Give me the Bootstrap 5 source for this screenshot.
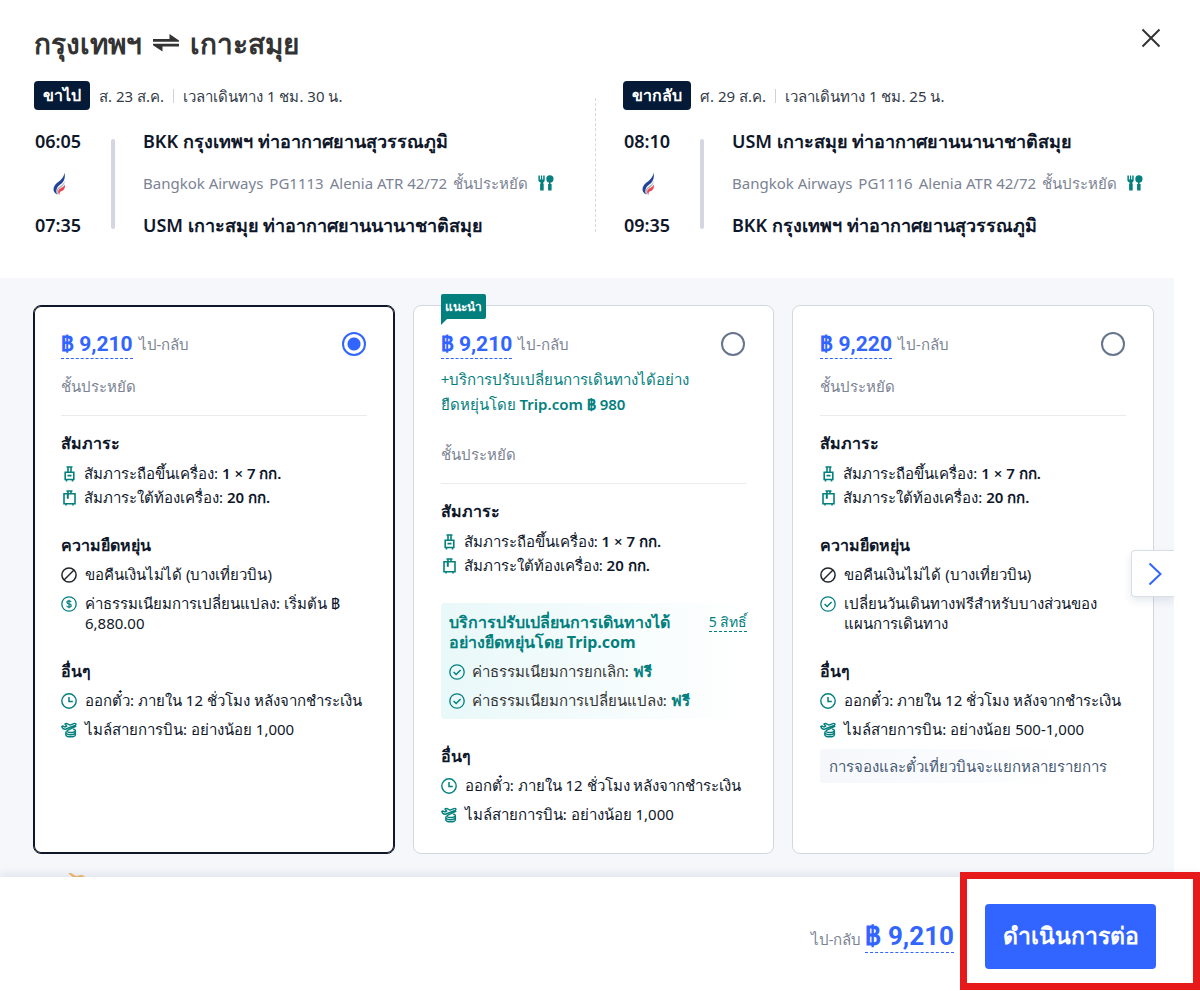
<!DOCTYPE html>
<html lang="th">
<head>
<meta charset="utf-8">
<meta name="viewport" content="width=device-width, initial-scale=1">
<title>กรุงเทพฯ ⇌ เกาะสมุย</title>
<link href="https://cdn.jsdelivr.net/npm/bootstrap@5.3.0/dist/css/bootstrap.min.css" rel="stylesheet">
<style>
:root{--ink:#0f172a;--blue:#3264ff;--teal:#03807e;--muted:#7b8394}
body{font-family:"Noto Sans",sans-serif;font-size:15px;line-height:20px;color:var(--ink);background:#fff}
svg{flex:none}
.trip-head{padding:26px 44px 41px 34px}
.trip-title{font-size:28px;line-height:34px;font-weight:700;color:#333;gap:10px}
.trip-bar{margin-bottom:21px}
.close-btn{width:28px;height:28px;margin:-4px -9px 0 0;color:#333}
.leg + .leg{padding-left:28px}
.leg-rule{left:0;top:17px;bottom:5px;border-left:1px dashed #d5d8de}
.leg-top{gap:9px;margin-bottom:19px}
.leg-tag{background:#051a37;color:#fff;border-radius:4px;padding:0 9px;line-height:29px;font-size:16px;font-weight:700}
.leg-meta{color:#333b49}
.leg-meta span + span{border-left:1px solid #ced2d9;padding-left:9px;margin-left:9px;line-height:14px}
.leg-grid{display:grid;grid-template-columns:48px 4px 1fr;column-gap:28px;row-gap:18px;line-height:24px;padding-left:1px}
.leg-line{grid-row:1 / span 3;grid-column:2;background:#d4d7df;border-radius:2px;margin:10px 0 8px}
.leg-time,.leg-port{font-size:18px;font-weight:600}
.leg-info{color:var(--muted);gap:6px}
.fares{background:#f5f7fb;margin-right:26px;padding:27px 20px 0 33px}
.fare-list{gap:18px}
.fare{flex:1 1 0;min-width:0;background:#fff;border:1px solid #d3d8e0;border-radius:8px;padding:23px 27px 29px}
.fare.chosen{border-color:var(--ink);box-shadow:inset 0 0 0 1px var(--ink)}
.fare-top{height:30px;gap:6px}
.price{color:var(--blue);font-family:Roboto,"Noto Sans",sans-serif;font-weight:700;font-size:21px;line-height:28px;border-bottom:1px dashed var(--blue);text-decoration:none}
.soft{color:var(--muted)}
.pick{appearance:none;width:24px;height:24px;border:2px solid #66758c;border-radius:50%;margin:0 1px 0 0;background:#fff}
.pick:checked{border-color:var(--blue);background:radial-gradient(circle,var(--blue) 0 6px,#fff 7px)}
.addon{margin-top:8px;margin-bottom:27px;color:var(--teal);line-height:25px}
.cabin{margin-top:17px;padding-bottom:19px;border-bottom:1px solid #e9ebef;color:var(--muted)}
.addon + .cabin{margin-top:0}
.sect{font-size:16px;line-height:20px;font-weight:700;margin:28px 0 0}
.cabin + .sect{margin-top:17px}
.item{display:flex;gap:8px;margin-top:9px}
.item svg{margin-top:3px;color:var(--teal)}
.item.bag{line-height:24px;margin-top:8px;gap:7px}
.item.bag svg{margin-top:5px}
.item.bag + .bag{margin-top:0}
.bag + .sect{margin-top:26px}
.perk + .sect{margin-top:27px}
.item b{font-weight:600}
.teal{color:var(--teal)}
.perk{margin-top:26px;margin-right:-1px;padding:9px 0 9px 8px;border-radius:4px;background:linear-gradient(90deg,#e9f8f9,#fff)}
.perk-name{color:var(--teal);font-size:16px;font-weight:700}
.perk .item{color:#333;gap:7px}
.perk-link{color:var(--teal);font-size:14px;line-height:19px;border-bottom:1px dashed var(--teal);text-decoration:none}
.note{margin-top:10px;line-height:34px;padding-left:9px;border-radius:3px;color:#455873;background:linear-gradient(90deg,#f5f7fb,#fff 80%)}
.ribbon{left:27px;top:-12px;background:var(--teal);color:#fff;font-size:12px;font-weight:700;line-height:25px;padding:0 4px;border-radius:2px 2px 2px 0}
.ribbon::after{content:"";position:absolute;left:0;top:25px;border-top:6px solid var(--teal);border-right:6px solid transparent}
.next-btn{right:0;top:272px;width:43px;height:47px;background:#fff;border:1px solid #d8deea;border-right:0;border-radius:4px 0 0 4px;color:var(--blue);box-shadow:0 4px 8px rgba(15,41,77,.1);padding:0 0 0 4px;clip-path:inset(-8px 0 -14px -10px)}
.peek{height:23px;overflow:hidden;padding-left:33px}
.paybar{box-shadow:0 -4px 8px rgba(15,41,77,.08);background:#fff;padding:27px 44px 22px}
.pay-price{font-size:26px;line-height:32px}
.go-wrap{margin-left:31px}
.go-btn{background:var(--blue);color:#fff;border:0;border-radius:4px;min-width:171px;height:65px;font-size:23px;font-weight:700;padding:0 16px 4px}
.callout{border:7px solid #e61a1a;inset:-32px -44px -21px -25px;pointer-events:none}
</style>
</head>
<body class="d-flex flex-column min-vh-100">
<svg class="d-none">
<symbol id="i-cabin" viewBox="0 0 16 16"><path d="M5.500 1h6M7 1v5M10 1v5M4.200 6.200h8.600v7.300H4.200zM6.500 9.600h4M5.500 13.500v1.900M11.500 13.500v1.900" fill="none" stroke="currentColor" stroke-width="1.600"/></symbol>
<symbol id="i-hold" viewBox="0 0 16 16"><path d="M5.500 1h6M7 1v2.800M10 1v2.800M3 3.800h11v9.900H3zM5 13.700v1.700M12 13.700v1.700" fill="none" stroke="currentColor" stroke-width="1.600"/><path d="M5.800 3.800h2v5h-2z" fill="currentColor"/></symbol>
<symbol id="i-no" viewBox="0 0 16 16"><path d="M13 3 3 13" stroke="currentColor" stroke-width="1.400"/><circle cx="8" cy="8" r="7.100" fill="none" stroke="currentColor" stroke-width="1.500"/></symbol>
<symbol id="i-fee" viewBox="0 0 16 16"><g fill="none" stroke="currentColor"><circle cx="8" cy="8" r="7.200" stroke-width="1.300"/><path d="M10.100 6.200C9.900 5.300 9.200 4.900 8 4.900S5.900 5.400 5.900 6.400C5.900 8.600 10.200 7.300 10.200 9.500 10.200 10.600 9.300 11.100 8 11.100S5.900 10.600 5.800 9.700M8 3.700v8.600" stroke-width="1.200"/></g></symbol>
<symbol id="i-ok" viewBox="0 0 16 16"><g fill="none" stroke="currentColor" stroke-width="1.300"><circle cx="8" cy="8" r="7.200"/><path d="m4.600 8 2.500 2.500 4.500-4.500" stroke-width="1.500"/></g></symbol>
<symbol id="i-clock" viewBox="0 0 16 16"><g fill="none" stroke="currentColor"><circle cx="8" cy="8" r="7.200" stroke-width="1.400"/><path d="M8 3.900v4.500h3.800" stroke-width="1.500"/></g></symbol>
<symbol id="i-miles" viewBox="0 0 16 16"><path d="M.8 4.500 2.200 4l1.600 1 2-.8L4 2l1.500-.6 3.600 1.700 3.700-1.500c2-.7 3 .9 1.200 1.700L5 7C3.200 7.600 1.600 6.600.8 4.500zM15.300 4.200 7 8.200c-1.500.8-1.400 1.600.5 2 2.800.5 6 0 6.700-1.200.4-.9-.4-1.500-2-1.800M5 9.500c-1.500 4 8.500 4.200 9.400 1M4.800 11v1.800c.5 2.600 9 2.700 9.600 0V9" fill="none" stroke="currentColor" stroke-width="1.400" stroke-linejoin="round"/></symbol>
<symbol id="i-meal" viewBox="0 0 16 16"><path d="M.4.500h1.500v4h1V.5h1.300v4h1V.5h1.500v5c0 .9-.6 1.500-1.300 1.700V9h.3v6.500H2.100V9h.4V7.200C1.300 7 .4 6.400.4 5.500z"/><circle cx="11.900" cy="3.900" r="3.600"/><path d="M11 6h1.600v3h1v6.500h-3.500V9h.9z"/></symbol>
<symbol id="i-pg" viewBox="0 0 14 26"><path d="M12.500 2c.9 6-.2 9.500-5 13C4 17.700 2.500 21 4.500 25.500.5 24-.8 19.500 2 15.500 5.500 11 11 10 12.500 2z" fill="#23429a"/><path d="M12.800 10c0 4-2 6.500-5 8.500S4.500 22.500 6 26c-2.700-2-3.500-5-.5-7.700s6.500-4 7.300-8.300z" fill="#aab0b8"/><path d="M12.800 14.500c.7 3.500-1 6.500-3.500 7.200-1.800.6-2.600 1.700-2 4C4.500 24 5.200 20.700 7.700 19s4.100-2 5.100-4.500z" fill="#ee4452"/></symbol>
</svg>

<header class="trip-head">
  <div class="trip-bar d-flex justify-content-between align-items-start">
    <h1 class="trip-title m-0 d-flex align-items-center">กรุงเทพฯ
      <svg width="28" height="18" viewBox="0 0 28 18" fill="#333"><path d="M17.500 0 27 6.500v1.200H1V5h16.500z"/><path d="M1 9.800h26v2.700H10.500V17.500L1 11.200z"/></svg>
      เกาะสมุย</h1>
    <button type="button" class="close-btn btn p-0 border-0" aria-label="ปิด"><svg width="20" height="20" viewBox="0 0 20 20"><path d="m1.500 1.500 17 17m0-17-17 17" stroke="currentColor" stroke-width="2"/></svg></button>
  </div>
  <div class="row g-0">
    <section class="col-6 leg">
      <div class="leg-top d-flex align-items-center">
        <span class="leg-tag">ขาไป</span><div class="leg-meta d-flex align-items-center"><span>ส. 23 ส.ค.</span><span>เวลาเดินทาง 1 ชม. 30 น.</span></div>
      </div>
      <div class="leg-grid">
        <span class="leg-time">06:05</span><i class="leg-line"></i><span class="leg-port">BKK กรุงเทพฯ ท่าอากาศยานสุวรรณภูมิ</span>
        <svg class="mx-auto" width="13" height="24"><use href="#i-pg"/></svg>
        <div class="leg-info d-flex align-items-center"><span>Bangkok Airways</span><span>PG1113</span><span>Alenia ATR 42/72</span><span>ชั้นประหยัด</span><svg class="teal ms-1" width="16" height="16" fill="currentColor"><use href="#i-meal"/></svg></div>
        <span class="leg-time">07:35</span><span class="leg-port">USM เกาะสมุย ท่าอากาศยานนานาชาติสมุย</span>
      </div>
    </section>
    <section class="col-6 leg position-relative">
      <i class="leg-rule position-absolute"></i>
      <div class="leg-top d-flex align-items-center">
        <span class="leg-tag">ขากลับ</span><div class="leg-meta d-flex align-items-center"><span>ศ. 29 ส.ค.</span><span>เวลาเดินทาง 1 ชม. 25 น.</span></div>
      </div>
      <div class="leg-grid">
        <span class="leg-time">08:10</span><i class="leg-line"></i><span class="leg-port">USM เกาะสมุย ท่าอากาศยานนานาชาติสมุย</span>
        <svg class="mx-auto" width="13" height="24"><use href="#i-pg"/></svg>
        <div class="leg-info d-flex align-items-center"><span>Bangkok Airways</span><span>PG1116</span><span>Alenia ATR 42/72</span><span>ชั้นประหยัด</span><svg class="teal ms-1" width="16" height="16" fill="currentColor"><use href="#i-meal"/></svg></div>
        <span class="leg-time">09:35</span><span class="leg-port">BKK กรุงเทพฯ ท่าอากาศยานสุวรรณภูมิ</span>
      </div>
    </section>
  </div>
</header>

<main class="fares position-relative">
  <div class="fare-list d-flex">
    <article class="fare chosen">
      <div class="fare-top d-flex align-items-center"><a href="#" class="price">฿ 9,210</a><label for="f1" class="soft">ไป-กลับ</label><input class="pick ms-auto" type="radio" name="fare" id="f1" checked></div>
      <div class="cabin">ชั้นประหยัด</div>
      <h2 class="sect">สัมภาระ</h2>
      <div class="item bag"><svg width="16" height="16"><use href="#i-cabin"/></svg><span>สัมภาระถือขึ้นเครื่อง: <b>1 × 7 กก.</b></span></div>
      <div class="item bag"><svg width="16" height="16"><use href="#i-hold"/></svg><span>สัมภาระใต้ท้องเครื่อง: <b>20 กก.</b></span></div>
      <h2 class="sect">ความยืดหยุ่น</h2>
      <div class="item"><svg class="text-dark" width="16" height="16"><use href="#i-no"/></svg><span>ขอคืนเงินไม่ได้ (บางเที่ยวบิน)</span></div>
      <div class="item"><svg width="16" height="16"><use href="#i-fee"/></svg><span>ค่าธรรมเนียมการเปลี่ยนแปลง: เริ่มต้น ฿<br>6,880.00</span></div>
      <h2 class="sect">อื่นๆ</h2>
      <div class="item"><svg width="16" height="16"><use href="#i-clock"/></svg><span>ออกตั๋ว: ภายใน 12 ชั่วโมง หลังจากชำระเงิน</span></div>
      <div class="item"><svg width="16" height="16"><use href="#i-miles"/></svg><span>ไมล์สายการบิน: อย่างน้อย 1,000</span></div>
    </article>

    <article class="fare position-relative">
      <span class="ribbon position-absolute">แนะนำ</span>
      <div class="fare-top d-flex align-items-center"><a href="#" class="price">฿ 9,210</a><label for="f2" class="soft">ไป-กลับ</label><input class="pick ms-auto" type="radio" name="fare" id="f2"></div>
      <div class="addon">+บริการปรับเปลี่ยนการเดินทางได้อย่าง<br>ยืดหยุ่นโดย <span class="fw-semibold">Trip.com ฿ 980</span></div>
      <div class="cabin">ชั้นประหยัด</div>
      <h2 class="sect">สัมภาระ</h2>
      <div class="item bag"><svg width="16" height="16"><use href="#i-cabin"/></svg><span>สัมภาระถือขึ้นเครื่อง: <b>1 × 7 กก.</b></span></div>
      <div class="item bag"><svg width="16" height="16"><use href="#i-hold"/></svg><span>สัมภาระใต้ท้องเครื่อง: <b>20 กก.</b></span></div>
      <div class="perk">
        <div class="d-flex justify-content-between align-items-start"><div class="perk-name">บริการปรับเปลี่ยนการเดินทางได้<br>อย่างยืดหยุ่นโดย Trip.com</div><a href="#" class="perk-link text-nowrap">5 สิทธิ์</a></div>
        <div class="item"><svg width="16" height="16"><use href="#i-ok"/></svg><span>ค่าธรรมเนียมการยกเลิก: <b class="teal">ฟรี</b></span></div>
        <div class="item"><svg width="16" height="16"><use href="#i-ok"/></svg><span>ค่าธรรมเนียมการเปลี่ยนแปลง: <b class="teal">ฟรี</b></span></div>
      </div>
      <h2 class="sect">อื่นๆ</h2>
      <div class="item"><svg width="16" height="16"><use href="#i-clock"/></svg><span>ออกตั๋ว: ภายใน 12 ชั่วโมง หลังจากชำระเงิน</span></div>
      <div class="item"><svg width="16" height="16"><use href="#i-miles"/></svg><span>ไมล์สายการบิน: อย่างน้อย 1,000</span></div>
    </article>

    <article class="fare">
      <div class="fare-top d-flex align-items-center"><a href="#" class="price">฿ 9,220</a><label for="f3" class="soft">ไป-กลับ</label><input class="pick ms-auto" type="radio" name="fare" id="f3"></div>
      <div class="cabin">ชั้นประหยัด</div>
      <h2 class="sect">สัมภาระ</h2>
      <div class="item bag"><svg width="16" height="16"><use href="#i-cabin"/></svg><span>สัมภาระถือขึ้นเครื่อง: <b>1 × 7 กก.</b></span></div>
      <div class="item bag"><svg width="16" height="16"><use href="#i-hold"/></svg><span>สัมภาระใต้ท้องเครื่อง: <b>20 กก.</b></span></div>
      <h2 class="sect">ความยืดหยุ่น</h2>
      <div class="item"><svg class="text-dark" width="16" height="16"><use href="#i-no"/></svg><span>ขอคืนเงินไม่ได้ (บางเที่ยวบิน)</span></div>
      <div class="item"><svg width="16" height="16"><use href="#i-ok"/></svg><span>เปลี่ยนวันเดินทางฟรีสำหรับบางส่วนของ<br>แผนการเดินทาง</span></div>
      <h2 class="sect">อื่นๆ</h2>
      <div class="item"><svg width="16" height="16"><use href="#i-clock"/></svg><span>ออกตั๋ว: ภายใน 12 ชั่วโมง หลังจากชำระเงิน</span></div>
      <div class="item"><svg width="16" height="16"><use href="#i-miles"/></svg><span>ไมล์สายการบิน: อย่างน้อย 500-1,000</span></div>
      <div class="note">การจองและตั๋วเที่ยวบินจะแยกหลายรายการ</div>
    </article>
  </div>
  <button type="button" class="next-btn position-absolute" aria-label="ถัดไป"><svg width="16" height="24" viewBox="0 0 16 24"><path d="m2.500 1.500 11 10.500-11 10.500" fill="none" stroke="currentColor" stroke-width="2"/></svg></button>
  <div class="peek"><svg class="mt-3" width="20" height="18" viewBox="0 0 20 18" fill="#f5b971"><path d="m2 3 3 0 5 3 5-1 4 1-5 3H9z"/></svg></div>
</main>

<footer class="paybar position-relative flex-grow-1 d-flex justify-content-end align-items-start">
  <div class="d-flex align-items-baseline mt-3"><span class="soft me-1">ไป-กลับ</span><a href="#" class="price pay-price">฿ 9,210</a></div>
  <div class="go-wrap position-relative"><button type="button" class="go-btn">ดำเนินการต่อ</button><i class="callout position-absolute"></i></div>
</footer>
<script src="https://cdn.jsdelivr.net/npm/bootstrap@5.3.0/dist/js/bootstrap.bundle.min.js"></script>
</body>
</html>
